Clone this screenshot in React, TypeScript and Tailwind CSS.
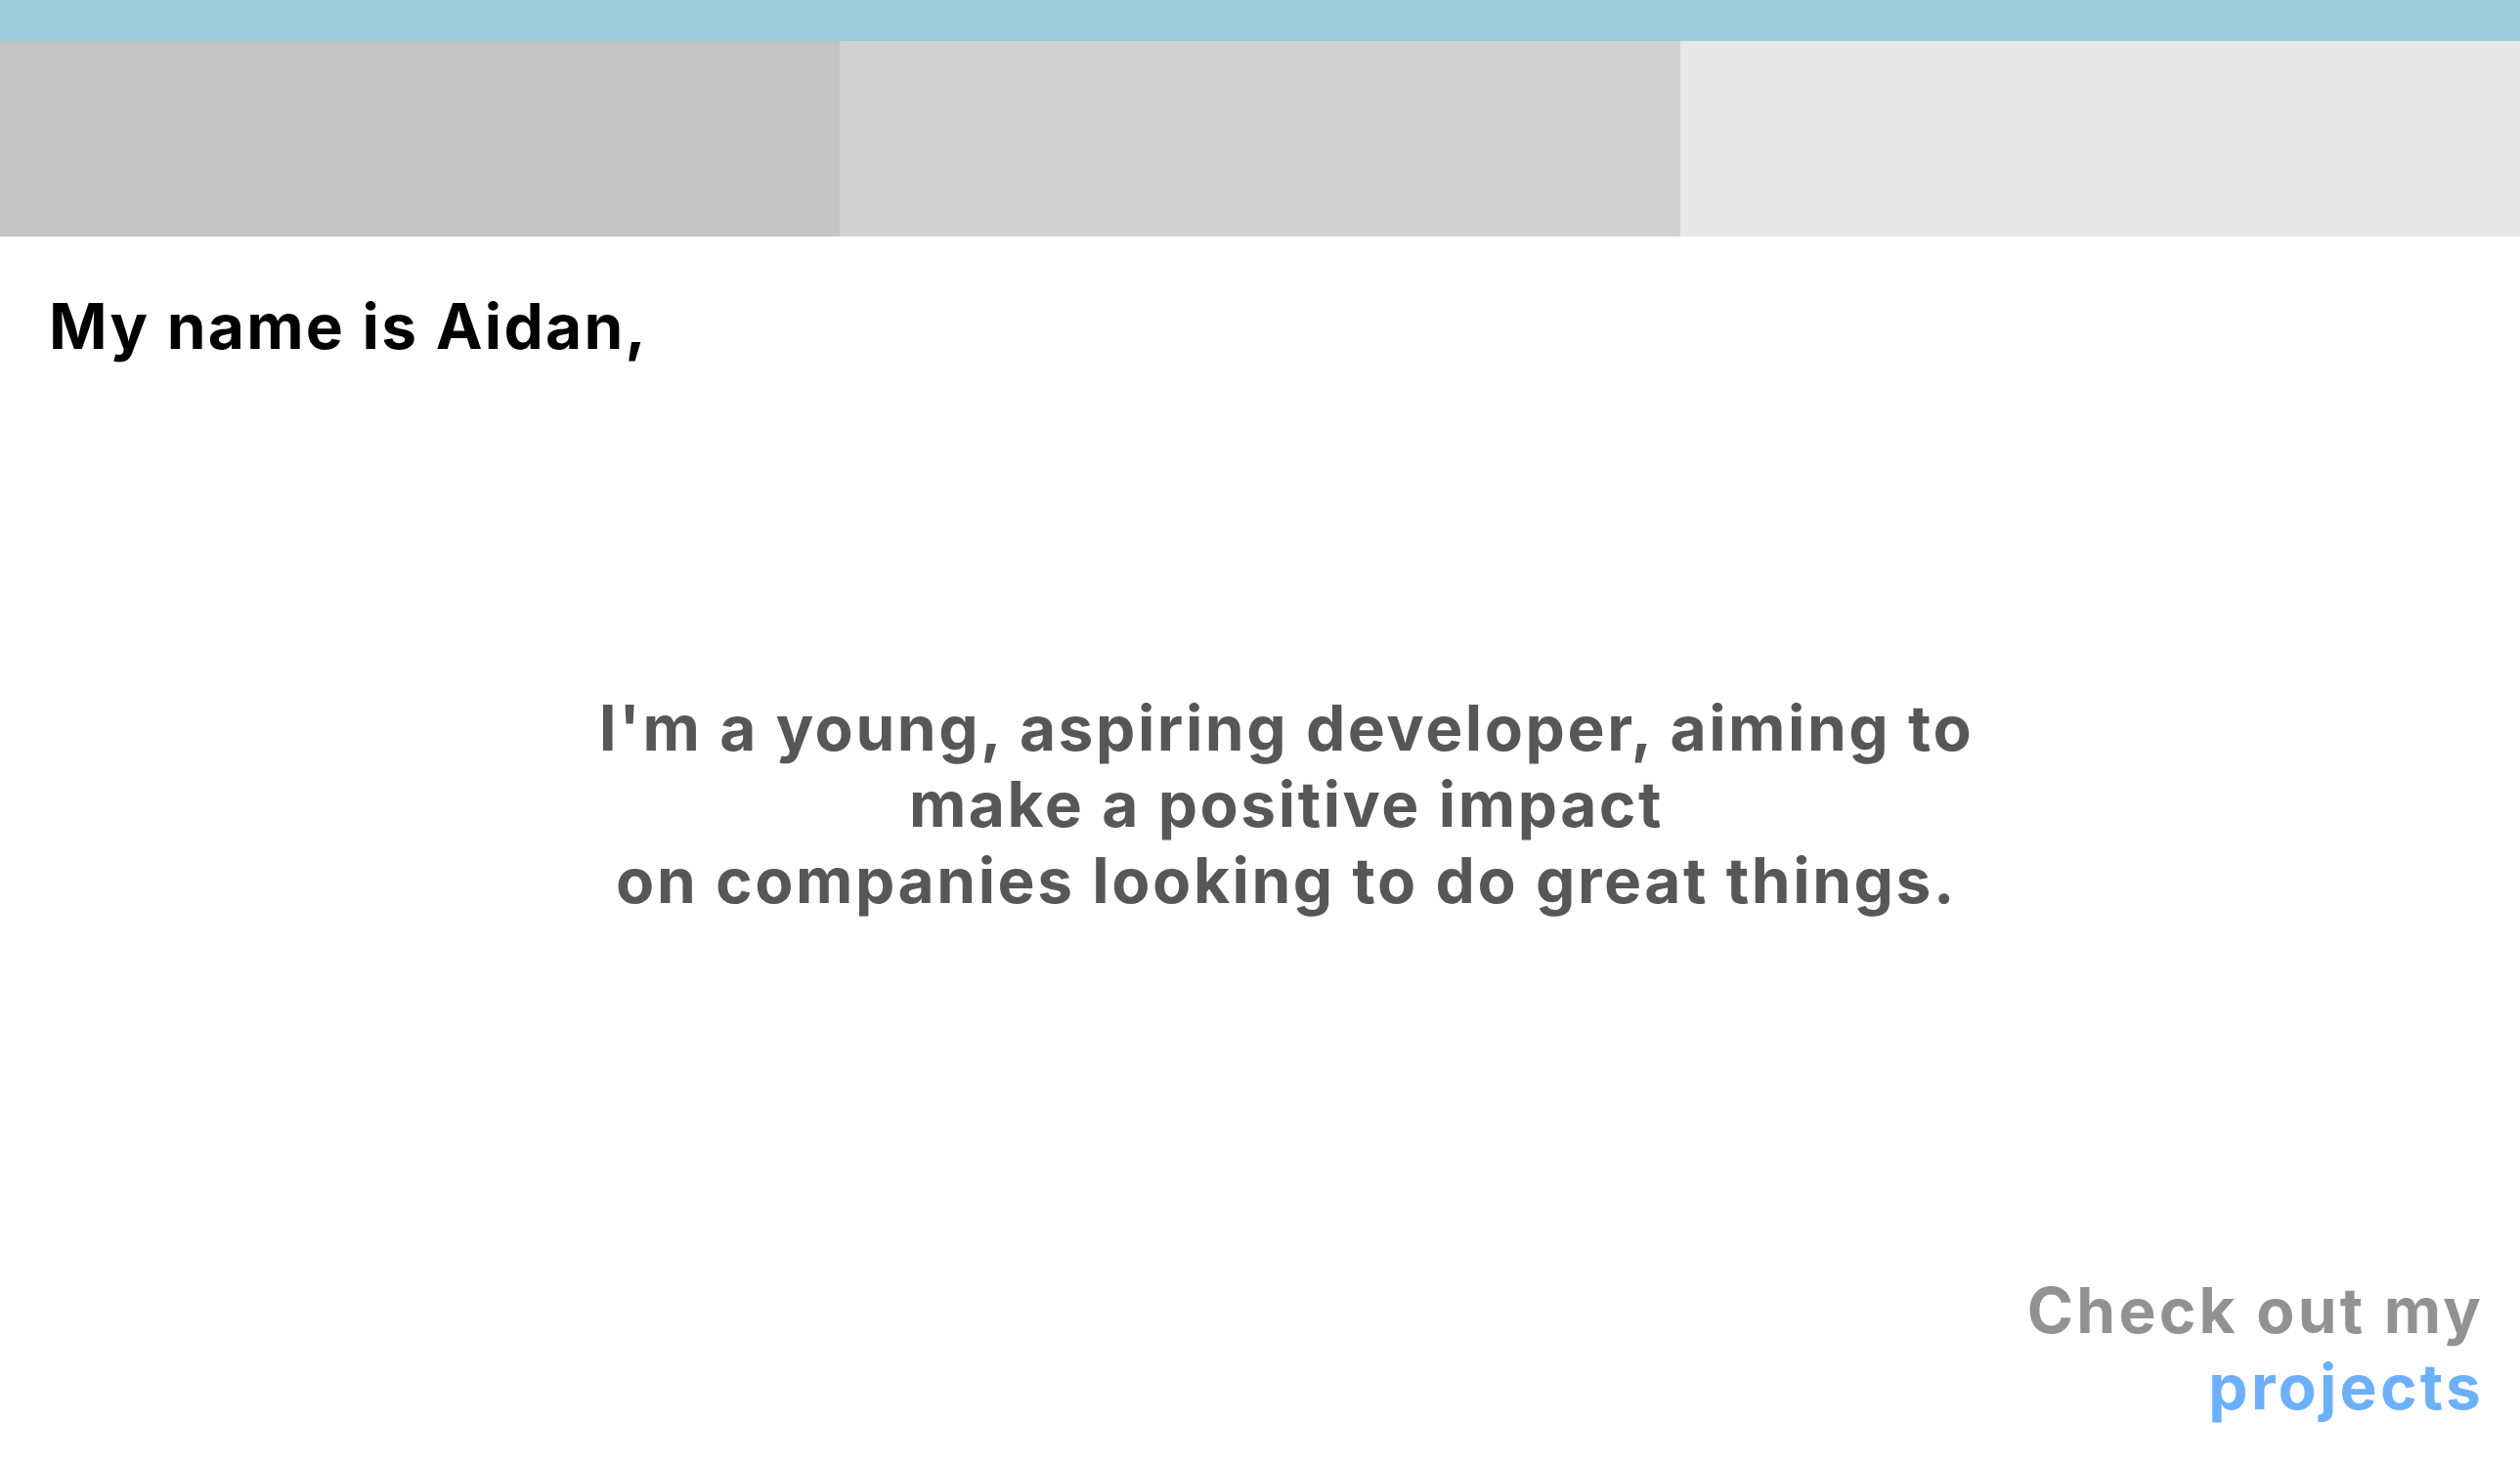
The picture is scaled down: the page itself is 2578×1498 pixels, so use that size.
export default function App() {
  return (
    <div className="flex min-h-screen flex-col bg-white font-['Inter',sans-serif] font-bold">
      {/* top bar */}
      <div className="h-[42px] w-full bg-[#9dcbd9]" />

      {/* banner panels */}
      <div className="grid h-[200px] grid-cols-3">
        <div className="bg-[#c4c4c4]" />
        <div className="bg-[#d1d1d1]" />
        <div className="bg-[#e8e8e8]" />
      </div>

      <h1 className="mt-[53px] pl-[50px] text-[64px] leading-[78px] tracking-[0.035em] text-black">
        My name is Aidan,
      </h1>

      <p className="mt-[333px] pl-[54px] text-center text-[64px] leading-[78px] tracking-[0.04em] text-[#575757]">
        I'm a young, aspiring developer, aiming to
        <br />
        make a positive impact
        <br />
        on companies looking to do great things.
      </p>

      <div className="mt-[362px] pr-[37px] text-right text-[64px] leading-[78px] tracking-[0.05em]">
        <p className="text-[#929292]">Check out my</p>
        <a href="#projects" className="text-[#6cb0fb]">
          projects
        </a>
      </div>
    </div>
  );
}
